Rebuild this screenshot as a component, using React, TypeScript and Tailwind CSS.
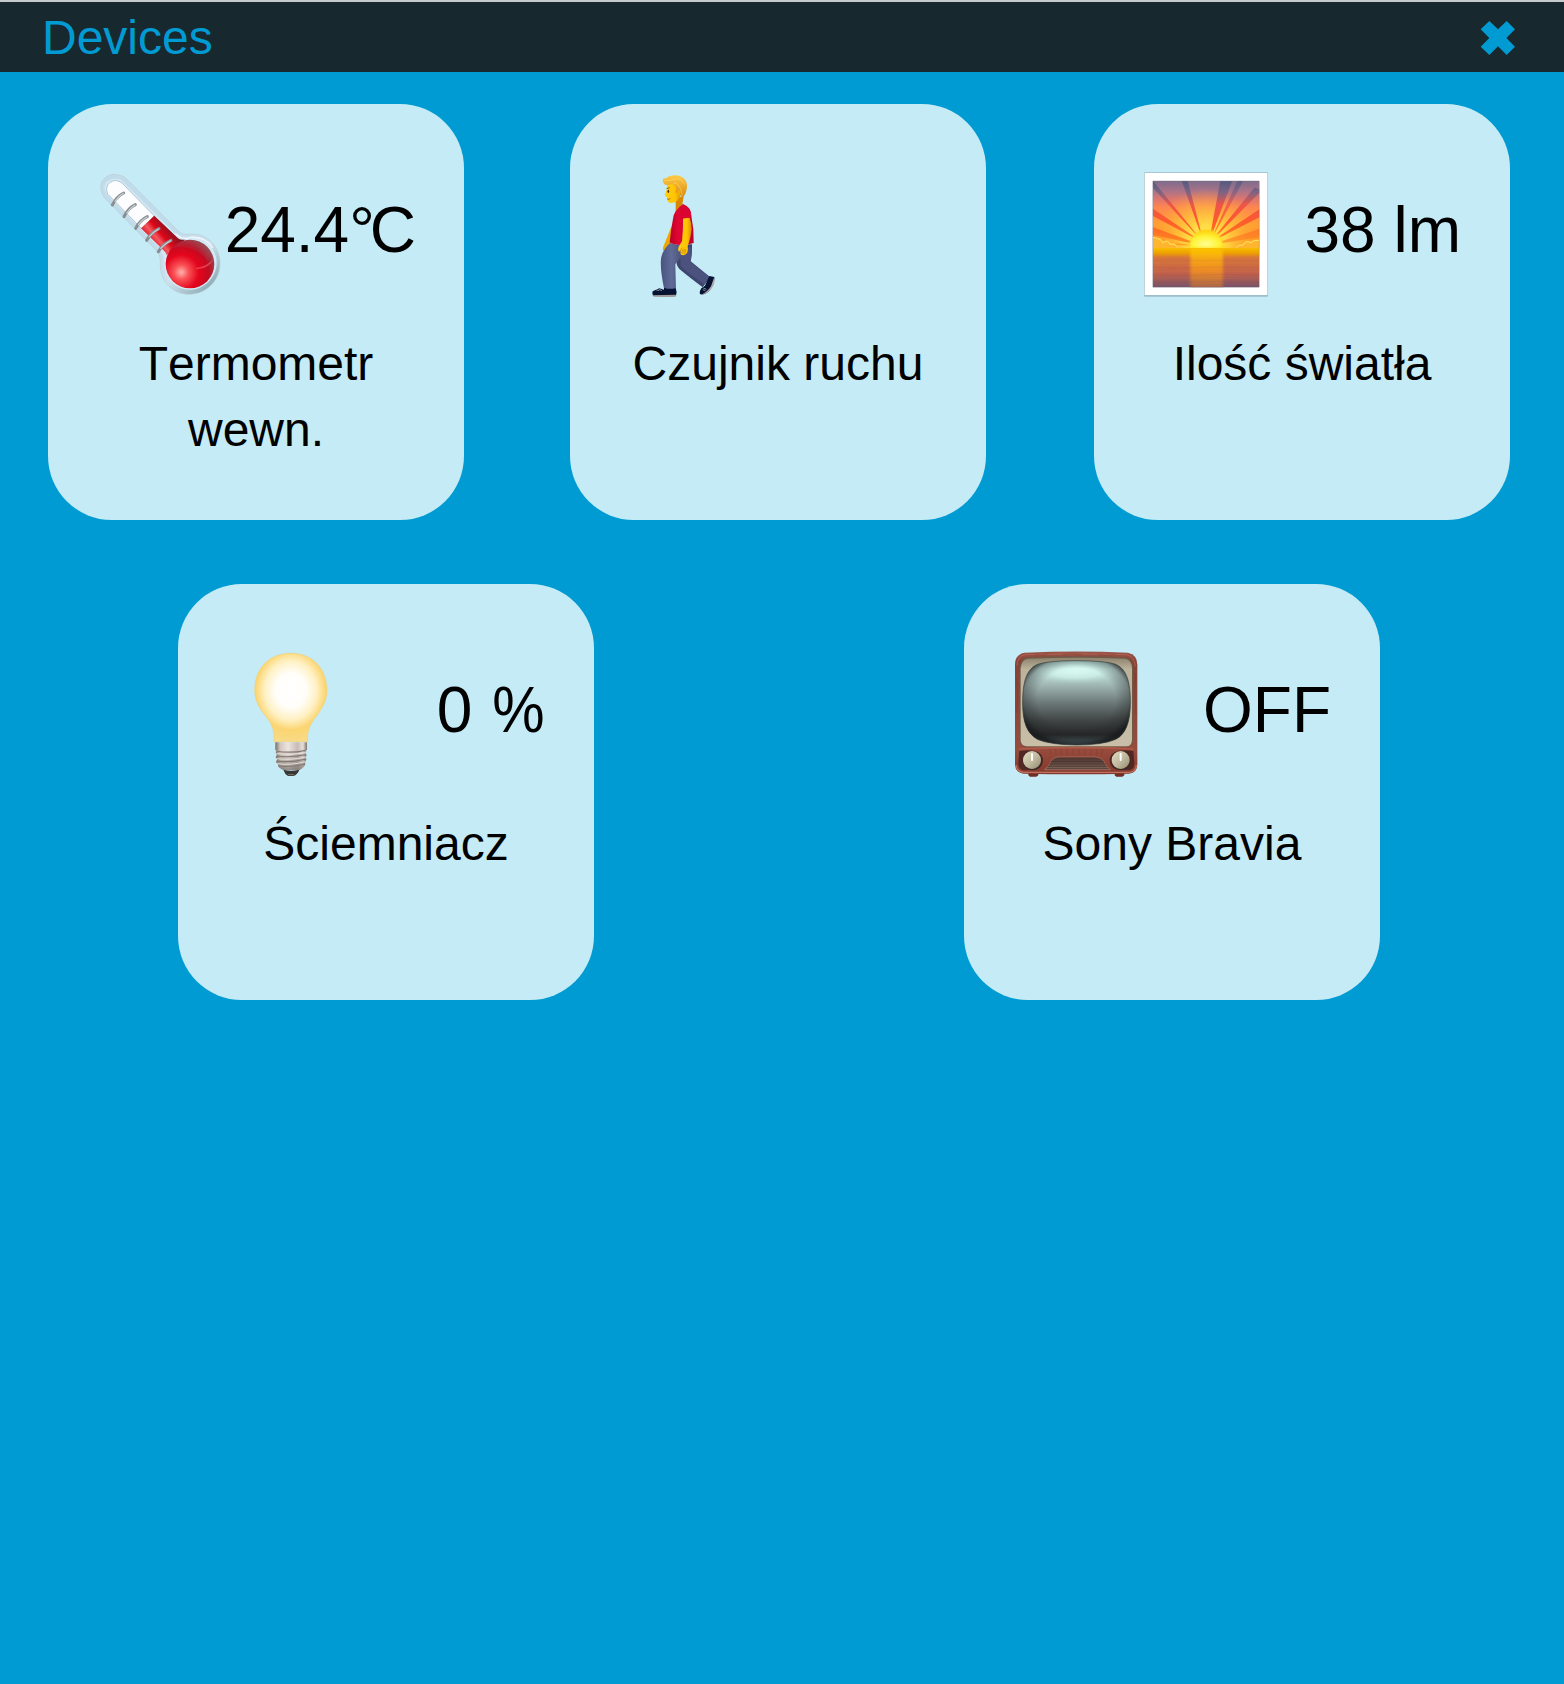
import type { ReactNode } from 'react'

function Thermometer() {
  return (
    <svg viewBox="17 29 384 384" className="size-32 shrink-0">
      <defs>
        <radialGradient id="t-red" cx="0.32" cy="0.67" r="0.75">
          <stop offset="0" stopColor="#ffb3ac" />
          <stop offset="0.2" stopColor="#fa5157" />
          <stop offset="0.48" stopColor="#e4051c" />
          <stop offset="0.75" stopColor="#c20a20" />
          <stop offset="1" stopColor="#925056" />
        </radialGradient>
        <linearGradient id="t-tube" x1="160" y1="225" x2="225" y2="170" gradientUnits="userSpaceOnUse">
          <stop offset="0" stopColor="#d80d20" />
          <stop offset="0.3" stopColor="#f4585f" />
          <stop offset="0.5" stopColor="#dd0719" />
          <stop offset="1" stopColor="#6d1522" />
        </linearGradient>
        <linearGradient id="t-glass" x1="220" y1="230" x2="370" y2="390" gradientUnits="userSpaceOnUse">
          <stop offset="0" stopColor="#c0dcea" />
          <stop offset="0.5" stopColor="#cce2ec" />
          <stop offset="0.8" stopColor="#a3bfca" />
          <stop offset="1" stopColor="#84a4b2" />
        </linearGradient>
      </defs>
      <path d="M42 112 Q24 84 36 62 Q55 34 91 45 Q103 49 113 60 L267 215 Q278 225 291 222 C345 214 388 253 389 308 C390 360 348 402 297 402 C247 402 209 363 210 312 Q211 292 205 278 L42 112Z" fill="url(#t-glass)" stroke="#bccbd2" strokeWidth="2" />
      <path d="M51 105 Q35 84 47 67 Q64 50 90 57 L257 222 Q276 236 291 232 C338 225 379 261 379 307 C379 350 342 388 299 388 C255 388 221 354 221 311 Q222 283 207 263Z" fill="#d3e9f5" />
      <path d="M52 101 Q43 79 59 66 Q76 54 95 68 L192 167 L153 204Z" fill="#fdfdff" stroke="#b2c7d2" strokeWidth="3" />
      <path d="M192 166 L263 234 Q271 240 284 238 L229 284 Q228 277 218 268 L152 204Z" fill="url(#t-tube)" />
      <circle cx="299" cy="311" r="73" fill="url(#t-red)" />
      <path d="M239 265 C282 232 326 225 362 274 L353 302 C325 265 281 252 239 265Z" fill="#9b5862" opacity=".22" />
      <path d="M317 323 Q350 319 371 294 Q355 329 317 326Z" fill="#ff8b95" opacity=".4" />
      <path d="M255 220 Q278 240 300 231 Q346 228 367 263" stroke="#f4f5ff" strokeWidth="4" fill="none" />
      <g fill="none" strokeLinecap="round" stroke="#868e92" strokeWidth="9">
        <path d="M66 134 Q78 109 100 98" /><path d="M101 169 Q113 144 135 133" /><path d="M136 204 Q148 180 171 169" /><path d="M169 240 Q182 216 206 205" /><path d="M204 274 Q217 251 242 240" />
      </g>
      <g fill="none" strokeLinecap="round" stroke="#cdd3d6" strokeWidth="3.5">
        <path d="M74 123 Q84 108 99 99" /><path d="M109 158 Q119 143 134 134" /><path d="M144 193 Q154 179 170 170" /><path d="M176 230 Q188 215 205 206" /><path d="M211 264 Q224 250 241 241" />
      </g>
    </svg>
  )
}

function Walker() {
  return (
    <svg viewBox="-35 29 384 384" className="size-32 shrink-0">
      <defs>
        <linearGradient id="w-hair" x1="0" y1="0" x2="0" y2="1"><stop offset="0" stopColor="#ffcb45" /><stop offset="1" stopColor="#d98a11" /></linearGradient>
        <linearGradient id="w-skin"><stop offset="0" stopColor="#ffcf19" /><stop offset=".65" stopColor="#ffc400" /><stop offset="1" stopColor="#dc8600" /></linearGradient>
        <linearGradient id="w-shirt"><stop offset="0" stopColor="#b90024" /><stop offset=".35" stopColor="#e20634" /><stop offset="1" stopColor="#bc0329" /></linearGradient>
        <linearGradient id="w-leg"><stop offset="0" stopColor="#4a5280" /><stop offset=".4" stopColor="#5f6b97" /><stop offset="1" stopColor="#414568" /></linearGradient>
      </defs>
      <path d="M126 196 L104 252 Q97 265 101 272 L108 267 L124 250 L140 200Z" fill="#efa600" />
      <path d="M136 254 L187 252 Q188 280 183 303 Q211 326 242 351 L219 381 Q178 350 149 326 Q134 309 142 274Z" fill="#3e456e" />
      <path d="M151 275 L187 258 Q186 288 182 305 Q203 323 240 350 L225 372 Q182 344 153 317Z" fill="#4b527d" />
      <path d="M121 248 Q153 258 174 251 L171 279 Q150 290 137 312 L139 386 Q122 390 103 384 Q91 327 94 295 Q98 269 121 248Z" fill="url(#w-leg)" />
      <path d="M69 393 Q79 389 89 384 L103 388 L103 382 Q119 388 138 384 Q143 395 139 406 L70 406 Q66 400 69 393Z" fill="#071332" />
      <path d="M69 405 L139 403 L138 409 Q119 411 72 409Z" fill="#a39a9a" />
      <path d="M239 347 L254 350 Q256 370 241 389 Q228 404 212 402 Q207 397 215 384 L226 376Z" fill="#071332" />
      <path d="M253 352 Q259 367 244 386 Q231 401 214 403 Q233 396 244 378Z" fill="#b4a9a6" />
      <path d="M78 388 L89 391 M87 386 L97 391 M221 383 L230 387 M219 388 L227 391" stroke="#bfc6d8" strokeWidth="2" />
      <path d="M138 116 L162 106 L158 133 Q139 149 138 158Z" fill="#d78800" />
      <path d="M160 131 Q185 140 185 168 L191 207 L192 248 Q169 256 154 254 Q131 254 120 246 Q124 206 130 175 Q132 151 160 131Z" fill="url(#w-shirt)" />
      <path d="M160 171 Q161 205 157 243 L148 257 Q143 268 148 274 L152 270 L153 282 Q162 288 170 280 Q177 273 174 259 Q184 230 186 207 Q185 185 180 172Z" fill="url(#w-skin)" />
      <path d="M157 262 L151 273 M161 265 L155 279 M165 266 L159 281 M169 266 L164 283" fill="none" stroke="#c88100" strokeWidth="2" />
      <path d="M160 136 Q187 143 185 171 L158 175Z" fill="#db0532" />
      <path d="M113 67 L111 88 L105 103 Q104 108 111 110 Q113 126 121 128 Q138 128 144 119 Q153 111 155 99 L149 67Z" fill="url(#w-skin)" />
      <path d="M99 58 Q99 53 110 54 Q116 45 138 45 Q160 47 168 61 Q175 73 170 91 Q166 107 157 111 L151 99 L143 94 L138 101 L138 80 L128 70 Q105 79 101 67Z" fill="url(#w-hair)" />
      <path d="M103 60 Q119 63 139 56 Q154 53 165 72 M133 69 Q151 66 158 105" fill="none" stroke="#ffe075" strokeWidth="3" opacity=".5" />
      <path d="M111 85 L120 82" stroke="#905500" strokeWidth="3" />
      <ellipse cx="116" cy="93" rx="2.5" ry="5" fill="#4c3000" />
      <path d="M112 116 Q119 119 123 114" fill="none" stroke="#a64a00" strokeWidth="2" />
      <path d="M143 91 Q153 87 152 99 Q150 109 145 110" fill="#efb000" />
    </svg>
  )
}

function Sunrise() {
  return (
    <svg viewBox="36 30 384 384" className="size-32 shrink-0">
      <defs>
        <linearGradient id="s-sky" x1="0" y1="0" x2="0" y2="1"><stop offset="0" stopColor="#7c6c8c" /><stop offset=".15" stopColor="#a97388" /><stop offset=".28" stopColor="#e0776c" /><stop offset=".4" stopColor="#ff8650" /><stop offset=".65" stopColor="#ffa032" /><stop offset="1" stopColor="#ff8b14" /></linearGradient>
        <radialGradient id="s-light" gradientUnits="userSpaceOnUse" cx="228" cy="250" r="165"><stop offset="0" stopColor="#ffff73" /><stop offset=".35" stopColor="#ffe045" stopOpacity=".9" /><stop offset=".65" stopColor="#ffc03c" stopOpacity=".6" /><stop offset="1" stopColor="#ffa040" stopOpacity="0" /></radialGradient>
        <linearGradient id="s-ray" gradientUnits="userSpaceOnUse" x1="0" y1="62" x2="0" y2="250"><stop offset="0" stopColor="#56597f" /><stop offset=".18" stopColor="#7b6384" /><stop offset=".38" stopColor="#ec5548" /><stop offset=".65" stopColor="#ff5a2c" /><stop offset="1" stopColor="#ff8a1e" /></linearGradient>
        <radialGradient id="s-sun" cx=".48" cy=".75" r=".8"><stop offset="0" stopColor="#ffff91" /><stop offset=".5" stopColor="#fff33c" /><stop offset="1" stopColor="#ffc900" /></radialGradient>
        <linearGradient id="s-sea" x1="0" y1="0" x2="0" y2="1"><stop offset="0" stopColor="#f8bd00" /><stop offset=".13" stopColor="#eda000" /><stop offset=".24" stopColor="#d8763a" /><stop offset=".65" stopColor="#c1604a" /><stop offset="1" stopColor="#77526a" /></linearGradient>
        <linearGradient id="s-glow" x1="0" y1="0" x2="0" y2="1"><stop offset="0" stopColor="#ffc800" /><stop offset=".5" stopColor="#f6951f" /><stop offset="1" stopColor="#a8624c" /></linearGradient>
        <filter id="s-blur"><feGaussianBlur stdDeviation="4" /></filter>
        <clipPath id="s-clip"><rect x="69" y="63" width="319" height="319" /></clipPath>
      </defs>
      <rect x="42" y="37" width="372" height="373" rx="3" fill="#9ebfc8" />
      <rect x="44" y="39" width="368" height="366" rx="1" fill="#fff" />
      <g clipPath="url(#s-clip)">
        <rect x="68" y="62" width="321" height="203" fill="url(#s-sky)" />
        <rect x="68" y="62" width="321" height="203" fill="url(#s-light)" />
        <g fill="url(#s-ray)">
          <path d="M222 250 L155 62 H173Z" /><path d="M236 250 L271 62 H307Z" /><path d="M238 250 L322 62 H340Z" opacity=".8" /><path d="M238 250 L374 82 L388 88 V98Z" /><path d="M236 250 L388 148 V172Z" /><path d="M236 256 L388 207 V232Z" opacity=".7" />
          <path d="M222 250 L69 62 V84Z" /><path d="M222 250 L69 146 V168Z" /><path d="M222 258 L69 202 V225Z" /><path d="M222 258 L69 243 V252Z" opacity=".7" />
        </g>
        <path d="M69 232 L82 233 Q93 233 100 243 Q119 234 123 248 Q140 246 145 264 H69Z" fill="#ffb52d" /><path d="M69 232 L82 235 Q93 236 98 248 Q116 239 120 253 Q137 249 143 264" fill="none" stroke="#ffe16c" strokeWidth="3" />
        <path d="M388 238 Q369 237 362 244 Q345 237 339 252 Q319 252 315 264 H388Z" fill="#ffb52d" /><path d="M388 241 Q370 239 363 248 Q346 240 340 255 Q323 254 318 264" fill="none" stroke="#ffe16c" strokeWidth="3" />
        <ellipse cx="229" cy="260" rx="53" ry="52" fill="#ffd629" filter="url(#s-blur)" opacity=".8" />
        <path d="M180 266 C178 232 201 210 229 210 C258 210 280 234 278 266Z" fill="url(#s-sun)" />
        <rect x="69" y="264" width="319" height="118" fill="url(#s-sea)" />
        <rect x="181" y="266" width="98" height="125" fill="url(#s-glow)" filter="url(#s-blur)" opacity=".85" />
        <g fill="none" stroke="#774257" strokeWidth="2" opacity=".15"><path d="M69 301 L140 299 L215 302 L300 300 L388 302" /><path d="M69 322 L150 324 L240 321 L388 323" /><path d="M69 344 L170 346 L280 343 L388 345" /><path d="M69 365 L160 367 L260 364 L388 367" /></g>
        <path d="M69 311 H388 M69 334 H388 M69 356 H388" stroke="#ffb05a" strokeWidth="1.5" opacity=".12" />
      </g>
      <rect x="68" y="63" width="320" height="319" rx="2" fill="none" stroke="#6f7279" strokeOpacity=".6" strokeWidth="2" />
    </svg>
  )
}

function Bulb() {
  return (
    <svg viewBox="-41 29 384 384" className="size-32 shrink-0">
      <defs>
        <radialGradient id="b-glass" gradientUnits="userSpaceOnUse" cx="153" cy="150" r="170" gradientTransform="translate(153 150) scale(.88 1) translate(-153 -150)"><stop offset="0" stopColor="#fff" /><stop offset=".3" stopColor="#fffefa" /><stop offset=".52" stopColor="#fff1c4" /><stop offset=".7" stopColor="#fbd571" /><stop offset="1" stopColor="#f6dc90" /></radialGradient>
        <linearGradient id="b-metal"><stop offset="0" stopColor="#766e69" /><stop offset=".15" stopColor="#d2c7bf" /><stop offset=".4" stopColor="#eee4df" /><stop offset=".7" stopColor="#c7bbb4" /><stop offset=".87" stopColor="#e7dfda" /><stop offset="1" stopColor="#7d726b" /></linearGradient>
        <linearGradient id="b-shade" x1="0" y1="0" x2="0" y2="1"><stop offset="0" stopColor="#55504c" stopOpacity="0" /><stop offset="1" stopColor="#504b48" stopOpacity=".55" /></linearGradient>
      </defs>
      <path d="M45 148 C46 82 90 39 154 39 C218 39 261 84 262 150 C262 181 247 205 228 231 C211 252 202 272 204 304 L103 304 C105 273 98 252 80 230 C59 204 45 181 45 148Z" fill="url(#b-glass)" stroke="#efcd6c" strokeWidth="1.5" />
      <path d="M107 306 H202 V330 H198 V340 L201 346 L197 352 L200 359 L195 366 L197 373 Q190 385 180 388 H130 Q118 384 115 376 L118 371 L109 367 L113 358 L108 351 L113 343 L108 337 L112 330 H107Z" fill="url(#b-metal)" />
      <path d="M107 330 H202 L196 374 Q190 385 180 389 H130 Q115 382 115 374Z" fill="url(#b-shade)" />
      <path d="M109 332 Q151 340 198 330 M109 347 Q151 353 199 343 M109 362 Q151 368 200 356 M116 377 Q155 382 196 371" fill="none" stroke="#847a74" strokeWidth="3.5" />
      <path d="M111 340 Q152 346 199 337 M111 355 Q151 361 200 350 M114 370 Q152 376 197 364" fill="none" stroke="#e3ddd8" strokeWidth="3" />
      <path d="M131 388 Q154 394 179 388 Q174 403 161 407 H145 Q135 401 131 388Z" fill="#393634" />
      <path d="M145 403 H163" stroke="#777" strokeWidth="3" />
    </svg>
  )
}

function Television() {
  return (
    <svg viewBox="35 30 384 384" className="size-32 shrink-0">
      <defs>
        <linearGradient id="v-wood" x1="0" y1="0" x2="0" y2="1"><stop offset="0" stopColor="#9c5648" /><stop offset=".08" stopColor="#864236" /><stop offset=".8" stopColor="#964b3d" /><stop offset="1" stopColor="#84392d" /></linearGradient>
        <linearGradient id="v-cream" x1="0" y1="0" x2="0" y2="1"><stop offset="0" stopColor="#8e846e" /><stop offset=".13" stopColor="#bdb39b" /><stop offset="1" stopColor="#c9bfa8" /></linearGradient>
        <linearGradient id="v-screen" x1="0" y1="0" x2="0" y2="1"><stop offset="0" stopColor="#a8ccc8" /><stop offset=".1" stopColor="#cdebe5" /><stop offset=".25" stopColor="#a9c2be" /><stop offset=".5" stopColor="#6c7978" /><stop offset=".7" stopColor="#424847" /><stop offset=".88" stopColor="#252727" /><stop offset="1" stopColor="#536d76" /></linearGradient>
        <radialGradient id="v-edge" cx=".5" cy=".45" r=".56"><stop offset=".65" stopColor="#222" stopOpacity="0" /><stop offset=".88" stopColor="#232526" stopOpacity=".35" /><stop offset="1" stopColor="#191b1c" stopOpacity=".85" /></radialGradient>
        <radialGradient id="v-light" cx=".5" cy=".5" r=".5"><stop offset="0" stopColor="#dcfff7" /><stop offset=".5" stopColor="#d8fff5" stopOpacity=".7" /><stop offset="1" stopColor="#b7ded9" stopOpacity="0" /></radialGradient>
        <linearGradient id="v-knob" x1="0" y1="0" x2="1" y2="1"><stop offset="0" stopColor="#e4dcc3" /><stop offset=".55" stopColor="#c0b89c" /><stop offset="1" stopColor="#918a71" /></linearGradient>
        <linearGradient id="v-grill" x1="0" y1="0" x2="0" y2="1"><stop offset="0" stopColor="#4a302b" /><stop offset="1" stopColor="#80665a" /></linearGradient>
      </defs>
      <path d="M84 395 H114 V406 L108 410 H89 L84 406Z M343 395 H372 V406 L366 410 H348 L343 406Z" fill="#712c25" />
      <path d="M44 75 Q44 43 72 38 Q227 31 383 38 Q411 44 411 75 V374 Q411 397 386 401 Q229 405 69 401 Q45 397 44 374Z" fill="url(#v-wood)" />
      <path d="M48 376 Q48 394 69 397 H388 Q407 394 408 375" fill="none" stroke="#c0705e" strokeWidth="4" />
      <path d="M50 77 Q50 48 76 44 Q228 39 379 44 Q403 50 405 79" fill="none" stroke="#b56554" strokeWidth="3" opacity=".8" />
      <path d="M58 85 Q60 54 83 52 Q228 46 375 52 Q396 56 398 85 V300 Q397 319 380 321 H78 Q61 319 58 303Z" fill="#6f5a48" />
      <path d="M61 85 Q63 58 84 56 Q228 51 374 56 Q394 60 395 85 V299 Q394 318 378 319 H79 Q63 317 61 302Z" fill="url(#v-cream)" />
      <path d="M67 188 C67 124 79 87 112 73 Q143 62 227 62 Q316 62 346 73 C379 87 390 126 390 188 C390 246 376 283 346 298 Q307 315 229 315 Q147 314 111 298 C79 279 67 246 67 188Z" fill="url(#v-screen)" />
      <ellipse cx="226" cy="96" rx="140" ry="36" fill="url(#v-light)" opacity=".75" />
      <path d="M67 188 C67 124 79 87 112 73 Q143 62 227 62 Q316 62 346 73 C379 87 390 126 390 188 C390 246 376 283 346 298 Q307 315 229 315 Q147 314 111 298 C79 279 67 246 67 188Z" fill="url(#v-edge)" stroke="#34393a" strokeWidth="2" />
      <path d="M56 327 Q228 319 399 327" fill="none" stroke="#b8614d" strokeWidth="5" opacity=".7" />
      <path d="M57 333 Q121 324 128 356 Q130 388 97 390 H68 Q54 386 54 369Z M399 333 Q335 324 328 356 Q326 388 359 390 H388 Q402 386 402 369Z" fill="#502724" />
      <path d="M133 389 Q148 375 151 365 Q159 351 178 351 L284 351 Q304 352 312 366 Q320 382 330 389Z" fill="url(#v-grill)" stroke="#b77460" strokeWidth="2" />
      <path d="M151 365 H311 M147 372 H316 M142 379 H320 M139 386 H325" stroke="#342925" strokeWidth="2" opacity=".8" />
      <path d="M100 42 L125 45 L145 41 M188 44 L213 41 L246 44 M292 43 L315 46 L347 42 M49 115 L52 165 L49 219 M406 100 L403 154 L407 225 M150 328 L152 342 M166 327 L167 345 M182 328 V344 M200 327 V345 M218 328 V343 M236 327 V345 M254 328 V344 M272 327 V345 M290 328 L289 344 M306 328 L304 346" fill="none" stroke="#6f2e26" strokeWidth="3" opacity=".3" />
      <circle cx="97" cy="362" r="29" fill="#3d2824" /><circle cx="95" cy="360" r="27" fill="url(#v-knob)" /><circle cx="362" cy="362" r="29" fill="#3d2824" /><circle cx="361" cy="360" r="27" fill="url(#v-knob)" />
      <path d="M95 342 V360 M361 342 V360" stroke="#fff" strokeWidth="6" strokeLinecap="round" />
    </svg>
  )
}

function DeviceCard({ icon, value, name }: { icon: ReactNode; value?: ReactNode; name: string }) {
  return (
    <article className="size-[416px] shrink-0 rounded-[64px] bg-[#c5ebf6] px-12 pt-[66px]">
      <div className="flex h-32 items-start justify-between pr-px">
        {icon}
        <span className="whitespace-nowrap pt-[23px] text-[64px] leading-[74px]">{value}</span>
      </div>
      <h2 className="pt-[33px] text-center text-[48px] leading-[66px]">{name}</h2>
    </article>
  )
}

export default function App() {
  return (
    <div className="min-h-[1684px] w-full bg-[#009bd3] font-['Liberation_Sans',Arial,sans-serif] text-black [font-kerning:none]">
      <header className="flex h-[72px] items-center justify-between border-t-2 border-[#c6cccd] bg-[#18282f] pr-12 pl-[42px] text-[#009bd3]">
        <h1 className="pt-0.5 text-[48px] leading-[70px]">Devices</h1>
        <button aria-label="Close" className="pt-0.5">
          <svg viewBox="120 60 108 108" className="size-9" fill="currentColor">
            <path d="M148 63 174 88 200 63 225 88 199 114 225 140 200 165 174 139 148 165 122 140 148 114 122 88Z" />
          </svg>
        </button>
      </header>
      <main className="flex flex-col gap-16 pt-8">
        <section className="flex gap-[106px] pl-12">
          <DeviceCard icon={<Thermometer />} value={<>24.4<span className="tracking-[-5px]">°</span><span className="-mr-px">C</span></>} name="Termometr wewn." />
          <DeviceCard icon={<Walker />} name="Czujnik ruchu" />
          <div className="ml-0.5">
            <DeviceCard icon={<Sunrise />} value="38 lm" name="Ilość światła" />
          </div>
        </section>
        <section className="flex justify-between pr-[184px] pl-[178px]">
          <DeviceCard icon={<Bulb />} value={<>0 <span className="-mr-0.5 inline-block scale-x-[.92]">%</span></>} name="Ściemniacz" />
          <DeviceCard icon={<Television />} value="OFF" name="Sony Bravia" />
        </section>
      </main>
    </div>
  )
}
